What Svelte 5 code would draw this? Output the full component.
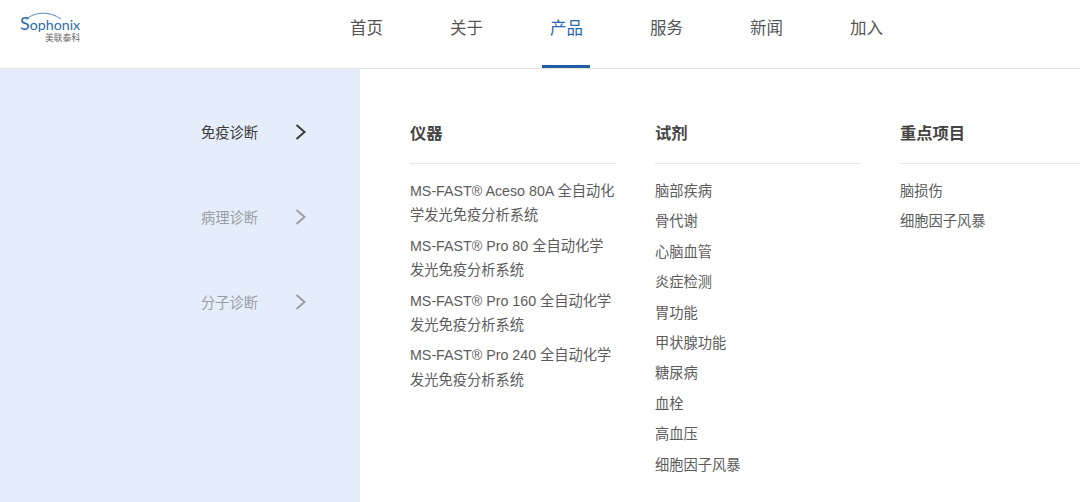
<script>
  const nav = ['首页', '关于', '产品', '服务', '新闻', '加入'];
  const side = ['免疫诊断', '病理诊断', '分子诊断'];
  const products = [
    'MS-FAST® Aceso 80A 全自动化学发光免疫分析系统',
    'MS-FAST® Pro 80 全自动化学发光免疫分析系统',
    'MS-FAST® Pro 160 全自动化学发光免疫分析系统',
    'MS-FAST® Pro 240 全自动化学发光免疫分析系统'
  ];
  const reagents = ['脑部疾病', '骨代谢', '心脑血管', '炎症检测', '胃功能', '甲状腺功能', '糖尿病', '血栓', '高血压', '细胞因子风暴'];
  const focus = ['脑损伤', '细胞因子风暴'];
</script>

<div class="page">
  <header class="header">
    <div class="logo">
      <svg class="arc" width="40" height="9" viewBox="0 0 40 9"><path d="M1 8.5C9 1 24 -0.5 36 8" fill="none" stroke="#3f78b8" stroke-width="0.9"/></svg>
      <div class="brand"><span class="big">S</span>ophonix</div>
      <div class="cn">美联泰科</div>
    </div>
    <nav class="nav">
      {#each nav as n, i}
        <div class="nav-item" class:active={i === 2}>{n}</div>
      {/each}
    </nav>
  </header>
  <div class="body">
    <aside class="side">
      {#each side as s, i}
        <div class="side-item" class:current={i === 0}>
          <span class="label">{s}</span>
          <svg width="12" height="18" viewBox="0 0 12 18"><path d="M1.5 2L9.5 9L1.5 16" fill="none" stroke="currentColor" stroke-width="2"/></svg>
        </div>
      {/each}
    </aside>
    <main class="cols">
      <section class="col">
        <h3>仪器</h3>
        <ul class="products">
          {#each products as p}<li>{p}</li>{/each}
        </ul>
      </section>
      <section class="col">
        <h3>试剂</h3>
        <ul class="plain">
          {#each reagents as r}<li>{r}</li>{/each}
        </ul>
      </section>
      <section class="col">
        <h3>重点项目</h3>
        <ul class="plain">
          {#each focus as r}<li>{r}</li>{/each}
        </ul>
      </section>
    </main>
  </div>
</div>

<style>
  :global(body) { margin: 0; background: #fff; overflow: hidden; }
  .page {
    width: 1080px; height: 502px; overflow: hidden;
    font-family: "Liberation Sans", "Noto Sans CJK SC", sans-serif;
    color: #555;
  }
  .header {
    box-sizing: border-box; display: flex;
    border-bottom: 1px solid #e4e4e4; height: 69px;
  }
  .logo { width: 350px; flex: none; padding: 14px 0 0 20px; box-sizing: border-box; position: relative; }
  .arc { position: absolute; left: 25px; top: 11px; }
  .brand { font-family: "Lato", sans-serif; font-size: 14.2px; line-height: 18px; letter-spacing: 0; color: #2f6cae; }
  .big { font-size: 18px; }
  .cn { font-size: 8.8px; line-height: 10px; color: #666; margin: -1px 0 0 25px; }
  .nav { display: flex; }
  .nav-item {
    width: 100px; font-size: 16.5px; line-height: 56px; color: #555; position: relative;
  }
  .nav-item.active { color: #2a67ad; }
  .nav-item.active::after {
    content: ""; position: absolute; left: -8px; width: 48px; height: 3px; top: 65px; background: #1f5ea8;
  }
  .body { display: flex; height: 433px; }
  .side {
    width: 360px; flex: none; background: #e4edf9; box-sizing: border-box;
    padding: 46px 0 0 201px; display: flex; flex-direction: column; gap: 51px;
  }
  .side-item { display: flex; align-items: center; justify-content: space-between; width: 106px; height: 34px; font-size: 14.25px; color: #9a9fa6; }
  .side-item.current { color: #3c3c3c; }
  .label { margin-top: -2px; }
  .cols { display: flex; padding: 51px 0 0 50px; gap: 39px; }
  .col { width: 206px; flex: none; }
  .col h3 {
    margin: 0; font-size: 16.3px; font-weight: 700; line-height: 26px; color: #444;
    padding-bottom: 17px; border-bottom: 1px solid #e6e6e6;
  }
  ul { list-style: none; margin: 15px 0 0; padding: 0; font-size: 14.25px; color: #5c5c5c; }
  .products li { line-height: 24.4px; margin-bottom: 6px; }
  .plain { margin-top: 12px; }
  .plain li { line-height: 30.4px; }
</style>
